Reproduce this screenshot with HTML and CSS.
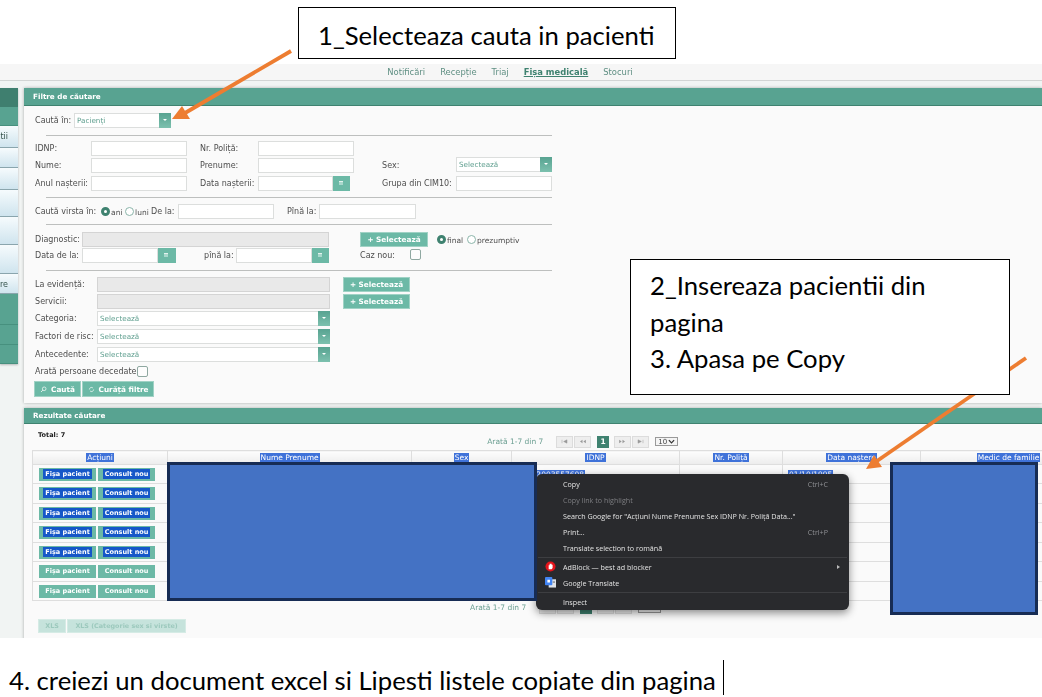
FILE: index.html
```html
<!DOCTYPE html>
<html lang="ro">
<head>
<meta charset="UTF-8">
<title>Instructiuni export pacienti</title>
<link rel="stylesheet" href="styles.css">
</head>
<body>
  <div class="top-space"></div>

  <div class="shot">
    <nav class="topnav">
      <a>Notificări</a><a>Recepție</a><a>Triaj</a><a class="active">Fișa medicală</a><a>Stocuri</a>
    </nav>

    <div class="main">
      <aside class="sidebar">
        <div class="side-head"></div>
        <div class="side-green h19"></div>
        <div class="side-item h22">tii</div>
        <div class="side-item h20"></div>
        <div class="side-item h22"></div>
        <div class="side-item h27"></div>
        <div class="side-item h28"></div>
        <div class="side-item h29"></div>
        <div class="side-item h20">re</div>
        <div class="side-green h31"></div>
        <div class="side-green h20"></div>
        <div class="side-green h19"></div>
      </aside>

      <div class="content">
        <section class="panel filters">
          <h3 class="panel-head">Filtre de căutare</h3>
          <form class="panel-body">
            <div class="row">
              <label class="lbl w39">Caută în:</label>
              <div class="combo w97"><span>Pacienți</span><i class="combo-btn"></i></div>
            </div>
            <hr class="mt7">

            <div class="row mt5">
              <label class="lbl w56">IDNP:</label>
              <input class="w96" type="text">
              <label class="lbl w58 ml13">Nr. Poliță:</label>
              <input class="w96" type="text">
            </div>
            <div class="row mt2">
              <label class="lbl w56">Nume:</label>
              <input class="w96" type="text">
              <label class="lbl w58 ml13">Prenume:</label>
              <input class="w96" type="text">
              <label class="lbl w74 ml28">Sex:</label>
              <div class="combo w96 up1"><span>Selectează</span><i class="combo-btn"></i></div>
            </div>
            <div class="row mt3">
              <label class="lbl w56">Anul nașterii:</label>
              <input class="w96" type="text">
              <label class="lbl w58 ml13">Data nașterii:</label>
              <input class="w75" type="text"><i class="cal-btn"></i>
              <label class="lbl w74 ml32">Grupa din CIM10:</label>
              <input class="w96" type="text">
            </div>
            <hr class="mt6">

            <div class="row mt6">
              <label class="lbl w66">Caută virsta în:</label>
              <i class="radio on"></i><span class="opt w15">ani</span>
              <i class="radio"></i><span class="opt w15">luni</span>
              <label class="lbl w27 ml2">De la:</label>
              <input class="w96" type="text">
              <label class="lbl w32 ml13">Pînă la:</label>
              <input class="w97" type="text">
            </div>
            <hr class="mt5">

            <div class="row mt7">
              <label class="lbl w47">Diagnostic:</label>
              <input class="w247" type="text" disabled>
              <button class="btn w68 ml31" type="button">+ Selectează</button>
              <i class="radio on ml9"></i><span class="opt w21">final</span>
              <i class="radio"></i><span class="opt">prezumptiv</span>
            </div>
            <div class="row mt1">
              <label class="lbl w47">Data de la:</label>
              <input class="w76" type="text"><i class="cal-btn w18"></i>
              <label class="lbl w32 ml28">pînă la:</label>
              <input class="w76" type="text"><i class="cal-btn"></i>
              <label class="lbl w50 ml31">Caz nou:</label>
              <i class="check up1"></i>
            </div>
            <hr class="mt7">

            <div class="row mt6">
              <label class="lbl w62">La evidență:</label>
              <input class="w233" type="text" disabled>
              <button class="btn w67 ml13" type="button">+ Selectează</button>
            </div>
            <div class="row mt2">
              <label class="lbl w62">Servicii:</label>
              <input class="w233" type="text" disabled>
              <button class="btn w67 ml13" type="button">+ Selectează</button>
            </div>
            <div class="row mt2">
              <label class="lbl w62">Categoria:</label>
              <div class="combo w233"><span>Selectează</span><i class="combo-btn"></i></div>
            </div>
            <div class="row mt3">
              <label class="lbl w62">Factori de risc:</label>
              <div class="combo w233"><span>Selectează</span><i class="combo-btn"></i></div>
            </div>
            <div class="row mt3">
              <label class="lbl w62">Antecedente:</label>
              <div class="combo w233"><span>Selectează</span><i class="combo-btn"></i></div>
            </div>
            <div class="row row-small mt4">
              <label class="lbl w102">Arată persoane decedate</label>
              <i class="check"></i>
            </div>
            <div class="row row-actions mt4">
              <button class="btn w47" type="button"><svg class="btn-icon" viewBox="0 0 10 10"><circle cx="6" cy="4" r="2.6" fill="none" stroke="#fff" stroke-width="1"/><path d="M4 6 1.5 8.5" stroke="#fff" stroke-width="1.2"/></svg>Caută</button>
              <button class="btn w72 ml1" type="button"><svg class="btn-icon" viewBox="0 0 10 10"><path d="M2 5a3 3 0 0 1 5-2.2M8 5a3 3 0 0 1-5 2.2" fill="none" stroke="#fff" stroke-width="1"/></svg>Curăță filtre</button>
            </div>
          </form>
        </section>

        <section class="panel results">
          <h3 class="panel-head small">Rezultate căutare</h3>
          <div class="toolbar">
            <b class="total">Total: 7</b>
            <div class="pager">
              <span class="pager-text">Arată 1-7 din 7</span>
              <a class="pg"><svg viewBox="0 0 10 6"><path d="M2 1v4M8 1 4 3l4 2z" fill="#999" stroke="#999" stroke-width=".6"/></svg></a>
              <a class="pg"><svg viewBox="0 0 10 6"><path d="M5 1 2 3l3 2zM9 1 6 3l3 2z" fill="#999"/></svg></a>
              <a class="pg-current">1</a>
              <a class="pg"><svg viewBox="0 0 10 6"><path d="M1 1l3 2-3 2zM5 1l3 2-3 2z" fill="#999"/></svg></a>
              <a class="pg"><svg viewBox="0 0 10 6"><path d="M8 1v4M2 1l4 2-4 2z" fill="#999" stroke="#999" stroke-width=".6"/></svg></a>
              <span class="pg-size">10<svg viewBox="0 0 8 5"><path d="M1 1l3 3 3-3" fill="none" stroke="#333" stroke-width="1.4"/></svg></span>
            </div>
          </div>

          <table class="grid">
            <colgroup>
              <col class="c-act"><col class="c-name"><col class="c-sex"><col class="c-idnp"><col class="c-pol"><col class="c-date"><col class="c-med">
            </colgroup>
            <thead>
              <tr>
                <th><span class="sel">Acțiuni</span></th>
                <th><span class="sel">Nume Prenume</span></th>
                <th><span class="sel">Sex</span></th>
                <th><span class="sel">IDNP</span></th>
                <th><span class="sel">Nr. Poliță</span></th>
                <th><span class="sel">Data naștere</span></th>
                <th><span class="sel">Medic de familie</span></th>
              </tr>
            </thead>
            <tbody>
              <tr>
                <td class="acts"><a class="act"><span class="sel-btn">Fișa pacient</span></a><a class="act"><span class="sel-btn">Consult nou</span></a></td>
                <td></td><td></td>
                <td class="val idnp"><span class="sel">2002003557608</span></td>
                <td></td>
                <td class="val"><span class="sel">01/10/1995</span></td>
                <td></td>
              </tr>
              <tr><td class="acts"><a class="act"><span class="sel-btn">Fișa pacient</span></a><a class="act"><span class="sel-btn">Consult nou</span></a></td><td></td><td></td><td></td><td></td><td></td><td></td></tr>
              <tr><td class="acts"><a class="act"><span class="sel-btn">Fișa pacient</span></a><a class="act"><span class="sel-btn">Consult nou</span></a></td><td></td><td></td><td></td><td></td><td></td><td></td></tr>
              <tr><td class="acts"><a class="act"><span class="sel-btn">Fișa pacient</span></a><a class="act"><span class="sel-btn">Consult nou</span></a></td><td></td><td></td><td></td><td></td><td></td><td></td></tr>
              <tr><td class="acts"><a class="act"><span class="sel-btn">Fișa pacient</span></a><a class="act"><span class="sel-btn">Consult nou</span></a></td><td></td><td></td><td></td><td></td><td></td><td></td></tr>
              <tr><td class="acts"><a class="act">Fișa pacient</a><a class="act">Consult nou</a></td><td></td><td></td><td></td><td></td><td></td><td></td></tr>
              <tr><td class="acts"><a class="act">Fișa pacient</a><a class="act">Consult nou</a></td><td></td><td></td><td></td><td></td><td></td><td></td></tr>
            </tbody>
          </table>

          <div class="toolbar-bottom">
            <div class="pager">
              <span class="pager-text">Arată 1-7 din 7</span>
              <a class="pg"></a><a class="pg"></a><a class="pg-current"></a><a class="pg"></a><a class="pg"></a>
              <span class="pg-size"></span>
            </div>
          </div>

          <div class="exports">
            <button class="btn-off w28" type="button">XLS</button>
            <button class="btn-off w119" type="button">XLS (Categorie sex si virste)</button>
          </div>
        </section>
      </div>
    </div>

    <!-- context menu from the browser -->
    <ul class="menu">
      <li><span>Copy</span><kbd>Ctrl+C</kbd></li>
      <li class="off"><span>Copy link to highlight</span></li>
      <li><span>Search Google for "Acțiuni Nume Prenume Sex IDNP Nr. Poliță Data..."</span></li>
      <li><span>Print...</span><kbd>Ctrl+P</kbd></li>
      <li><span>Translate selection to română</span></li>
      <li class="sep"></li>
      <li>
        <svg class="menu-icon" viewBox="0 0 12 12"><circle cx="6" cy="6" r="5.5" fill="#e4141b"/><path d="M4 9V4.5h1V3h2.2v1.2H8.3V7.5L7.2 9z" fill="#fff"/></svg>
        <span>AdBlock — best ad blocker</span><i class="menu-arrow"></i>
      </li>
      <li>
        <svg class="menu-icon" viewBox="0 0 12 12"><rect x="4" y="2.5" width="8" height="9" fill="#dfe3e8"/><rect x="0" y="0" width="8" height="9" rx="1" fill="#4285f4"/><rect x="2.6" y="3" width="2.8" height="3" fill="#fff"/><rect x="8.5" y="5" width="2.4" height="1" fill="#555"/></svg>
        <span>Google Translate</span>
      </li>
      <li class="sep"></li>
      <li><span>Inspect</span></li>
    </ul>
  </div>

  <p class="caption">4. creiezi un document excel si Lipesti listele copiate din pagina<i class="caret"></i></p>

  <!-- annotations drawn over the screenshot -->
  <div class="cover cover-a"></div>
  <div class="cover cover-b"></div>

  <svg class="arrows" viewBox="0 0 1042 697">
    <path d="M291 51 185 113" fill="none" stroke="#ed7d31" stroke-width="3.8"/>
    <path d="M172 119 182 106 190 119z" fill="#ed7d31"/>
    <path d="M1026 358 877 461" fill="none" stroke="#ed7d31" stroke-width="3.8"/>
    <path d="M866 469 874 455 882 467z" fill="#ed7d31"/>
  </svg>

  <div class="note note-one">1_Selecteaza cauta in pacienti</div>
  <div class="note note-two">2_Insereaza pacientii din<br>pagina<br>3. Apasa pe Copy</div>
</body>
</html>
```

FILE: styles.css
```css
html, body {
  margin: 0;
  padding: 0;
}

body {
  position: relative;
  width: 1042px;
  height: 697px;
  overflow: hidden;
  background: #fff;
  font-family: "DejaVu Sans", Verdana, sans-serif;
}

.top-space {
  height: 64px;
}

/* the browser screenshot */
.shot {
  position: relative;
  height: 574px;
  overflow: hidden;
  background: #f1f4f3;
  font-size: 8px;
  color: #4d4d4d;
  filter: blur(0.35px);
}

.topnav {
  display: flex;
  justify-content: center;
  gap: 15px;
  height: 16px;
  padding-right: 22px;
  line-height: 17px;
  font-size: 8.4px;
  background: #f6f6f6;
  border-bottom: 1px solid #d2d5d4;
  color: #5f8f83;
}

.topnav .active {
  font-weight: bold;
  text-decoration: underline;
  color: #3f8270;
}

.main {
  display: flex;
  gap: 6px;
  padding-top: 7px;
}

.sidebar {
  flex: 0 0 18px;
  box-shadow: 0 1px 2px rgba(0, 0, 0, .25);
  align-self: flex-start;
}

.side-head {
  height: 19px;
  background: #3f7f6f;
}

.side-green {
  background: #58a391;
  border-bottom: 1px solid #47907e;
  box-sizing: border-box;
}

.side-item {
  box-sizing: border-box;
  padding: 6px 10px 0 0;
  text-align: right;
  font-size: 8px;
  color: #34524b;
  background: linear-gradient(#f6fbfd, #cfe4ee);
  border-bottom: 1px solid #8aa5ad;
}

.h19 { height: 19px; }
.h20 { height: 20px; }
.h22 { height: 22px; }
.h27 { height: 27px; }
.h28 { height: 28px; }
.h29 { height: 29px; }
.h31 { height: 31px; }

.content {
  flex: 1;
  min-width: 0;
}

.panel {
  background: #fafafa;
  box-shadow: 0 0 3px rgba(0, 0, 0, .3);
}

.filters {
  margin-bottom: 5px;
}

.panel-head {
  margin: 0;
  height: 17px;
  padding-left: 9px;
  font-size: 7.2px;
  line-height: 18px;
  color: #fff;
  background: #58a391;
  border-bottom: 1px solid #3f8270;
}

.panel-head.small {
  height: 15px;
  line-height: 15px;
}

.panel-body {
  margin: 0;
  padding: 7px 0 6px 11px;
}

hr {
  width: 506px;
  height: 1px;
  margin-bottom: 0;
  margin-left: 11px;
  margin-right: 0;
  padding: 0;
  border: 0;
  background: #bdbfbe;
}

.row {
  display: flex;
  align-items: center;
  height: 15px;
}

.row-small { height: 11px; }
.row-actions { height: 16px; margin-left: -1px; }

.mt1 { margin-top: 1px; }
.mt2 { margin-top: 2px; }
.mt3 { margin-top: 3px; }
.mt4 { margin-top: 4px; }
.mt5 { margin-top: 5px; }
.mt6 { margin-top: 6px; }
.mt7 { margin-top: 7px; }

.ml1 { margin-left: 1px; }
.ml2 { margin-left: 2px; }
.ml9 { margin-left: 9px; }
.ml13 { margin-left: 13px; }
.ml28 { margin-left: 28px; }
.ml31 { margin-left: 31px; }
.ml32 { margin-left: 32px; }

.up1 { position: relative; top: -1px; }

.w15 { width: 15px; }
.w21 { width: 21px; }
.w27 { width: 27px; }
.w28 { width: 28px; }
.w32 { width: 32px; }
.w39 { width: 39px; }
.w47 { width: 47px; }
.w50 { width: 50px; }
.w56 { width: 56px; }
.w58 { width: 58px; }
.w62 { width: 62px; }
.w66 { width: 66px; }
.w67 { width: 67px; }
.w68 { width: 68px; }
.w72 { width: 72px; }
.w74 { width: 74px; }
.w75 { width: 75px; }
.w76 { width: 76px; }
.w96 { width: 96px; }
.w97 { width: 97px; }
.w102 { width: 102px; }
.w119 { width: 119px; }
.w233 { width: 233px; }
.w247 { width: 247px; }

.lbl {
  flex: none;
  white-space: nowrap;
}

input {
  flex: none;
  box-sizing: border-box;
  height: 15px;
  margin: 0;
  padding: 0 3px;
  background: #fff;
  border: 1px solid #dcdedd;
}

input:disabled {
  background: #e9e9e9;
  border-color: #d4d4d4;
}

.combo {
  flex: none;
  box-sizing: border-box;
  display: flex;
  justify-content: space-between;
  height: 15px;
  padding-left: 2px;
  line-height: 13px;
  font-size: 7.2px;
  color: #5f9f8f;
  background: #fff;
  border: 1px solid #dcdedd;
}

.combo-btn {
  position: relative;
  width: 12px;
  margin: -1px -1px -1px 0;
  background: linear-gradient(#58a391, #7cc0ae);
}

.combo-btn::after {
  content: "";
  position: absolute;
  left: 4px;
  top: 6px;
  border: 2px solid transparent;
  border-top: 2px solid #fff;
}

.cal-btn {
  flex: none;
  position: relative;
  width: 17px;
  height: 15px;
  background: #6cb9a6;
}

.cal-btn.w18 { width: 18px; }

.cal-btn::after {
  content: "";
  position: absolute;
  left: 6px;
  top: 5px;
  width: 4px;
  height: 3px;
  background: #a9d8cc;
  border-top: 1px solid #e2f2ee;
}

.radio {
  flex: none;
  box-sizing: border-box;
  width: 9px;
  height: 9px;
  border: 1px solid #8bb5aa;
  border-radius: 50%;
  background: #fff;
}

.radio.on {
  border: 3px solid #3f8270;
}

.opt {
  flex: none;
  box-sizing: border-box;
  padding: 2px 0 0 1px;
  font-size: 7.5px;
  color: #4d4d4d;
}

.check {
  flex: none;
  box-sizing: border-box;
  width: 11px;
  height: 11px;
  background: #fdfdfd;
  border: 1px solid #8fa8a1;
  border-radius: 2px;
}

.btn {
  flex: none;
  display: flex;
  align-items: center;
  justify-content: center;
  height: 15px;
  padding: 0;
  font: bold 7.3px "DejaVu Sans", Verdana, sans-serif;
  color: #fff;
  background: #6cb9a6;
  border: 1px solid #a0d2c5;
}

.row-actions .btn {
  height: 16px;
}

.btn-icon {
  width: 7px;
  height: 7px;
  margin-right: 4px;
}

/* results */
.results {
  height: 240px;
}

.toolbar {
  display: flex;
  height: 26px;
}

.total {
  margin: 7px 0 0 14px;
  font-size: 6.5px;
  color: #222;
}

.pager {
  display: flex;
  align-items: center;
  height: 13px;
  color: #6a9e91;
}

.toolbar .pager {
  margin: 11px 0 0 422px;
}

.pager-text {
  width: 69px;
  font-size: 7.5px;
}

.pg {
  display: flex;
  align-items: center;
  justify-content: center;
  box-sizing: border-box;
  width: 17px;
  height: 12px;
  margin-right: 1px;
  background: #eee;
  border: 1px solid #dcdcdc;
}

.pg svg {
  width: 9px;
  height: 5px;
}

.pg-current {
  box-sizing: border-box;
  width: 12px;
  height: 12px;
  margin: 0 5px;
  line-height: 12px;
  text-align: center;
  font-size: 7.5px;
  font-weight: bold;
  color: #fff;
  background: #3f8270;
}

.pg-size {
  display: flex;
  align-items: center;
  justify-content: space-between;
  box-sizing: border-box;
  width: 23px;
  height: 9px;
  margin-left: 5px;
  padding: 0 2px;
  font-size: 7px;
  color: #444;
  background: #f4f4f4;
  border: 1px solid #999;
}

.pg-size svg {
  width: 7px;
  height: 5px;
}

.grid {
  table-layout: fixed;
  width: 1064px;
  margin-left: 8px;
  border-collapse: collapse;
  font-size: 7.5px;
}

.c-act { width: 135px; }
.c-name { width: 244px; }
.c-sex { width: 100px; }
.c-idnp { width: 168px; }
.c-pol { width: 103px; }
.c-date { width: 138px; }
.c-med { width: 176px; }

.grid thead tr { height: 14px; }
.grid tbody tr { height: 19px; }
.grid tbody tr:nth-child(even) { height: 20px; }

.grid th {
  box-sizing: border-box;
  height: 14px;
  padding: 0;
  line-height: 9px;
  font-weight: normal;
  background: linear-gradient(#fdfdfd, #ececec);
  border: 1px solid #dedede;
}

.grid td {
  box-sizing: border-box;
  padding: 0;
  line-height: 9px;
  border: 1px solid #dedede;
  background: #fafafa;
}

.grid .val {
  vertical-align: top;
  padding: 5px 0 0 5px;
}

.grid .idnp {
  padding-left: 9px;
}

.sel {
  color: #fff;
  background: #3f72d9;
  padding: 0 1px;
}

.acts {
  padding-left: 6px !important;
  white-space: nowrap;
}

.act {
  display: inline-block;
  box-sizing: border-box;
  width: 57px;
  height: 13px;
  margin-left: 2px;
  line-height: 13px;
  text-align: center;
  font-size: 6.5px;
  font-weight: bold;
  color: #fff;
  background: #6cb9a6;
  vertical-align: middle;
}

.acts .act:first-child {
  margin-left: 0;
}

.sel-btn {
  padding: 1px 2px;
  background: #1557c8;
}

.toolbar-bottom {
  height: 18px;
}

.toolbar-bottom .pager {
  margin-left: 446px;
}

.toolbar-bottom .pg-size {
  height: 11px;
}

.exports {
  display: flex;
  gap: 1px;
  margin-left: 14px;
}

.btn-off {
  height: 14px;
  padding: 0;
  font: bold 6.4px "DejaVu Sans", Verdana, sans-serif;
  color: #9cc9bd;
  background: #c6e3dc;
  border: 1px solid #d5ebe5;
}

/* context menu */
.menu {
  position: absolute;
  left: 536px;
  top: 410px;
  box-sizing: border-box;
  width: 313px;
  height: 136px;
  margin: 0;
  padding: 2px 0;
  list-style: none;
  font-family: "Open Sans", sans-serif;
  font-size: 7.15px;
  color: #e3e3e3;
  background: #292a2d;
  border-radius: 6px;
  box-shadow: 0 3px 9px rgba(0, 0, 0, .45);
}

.menu li {
  position: relative;
  display: flex;
  justify-content: space-between;
  align-items: center;
  height: 16px;
  padding: 0 21px 0 27px;
}

.menu li.off {
  color: #7d7e81;
}

.menu li.sep {
  height: 1px;
  margin: 1px 2px 1px;
  padding: 0;
  background: #3d3e41;
}

.menu kbd {
  font: inherit;
  color: #8f9094;
}

.menu-icon {
  position: absolute;
  left: 9px;
  top: 2px;
  width: 11px;
  height: 11px;
}

.menu-arrow {
  position: absolute;
  right: 7px;
  top: 6px;
  border: 2px solid transparent;
  border-left: 3px solid #bbb;
}

/* word style notes */
.caption {
  margin: 0;
  padding: 28px 0 0 9px;
  font-family: Lato, "Open Sans", sans-serif;
  font-size: 25.7px;
  line-height: 28px;
  color: #000;
  white-space: nowrap;
}

.caret {
  position: absolute;
  left: 723px;
  top: 660px;
  width: 1px;
  height: 35px;
  background: #000;
}

.cover {
  position: absolute;
  box-sizing: border-box;
  background: #4472c4;
  border: 3px solid #172c54;
}

.cover-a {
  left: 167px;
  top: 462px;
  width: 370px;
  height: 139px;
}

.cover-b {
  left: 890px;
  top: 462px;
  width: 148px;
  height: 153px;
}

.arrows {
  position: absolute;
  left: 0;
  top: 0;
  width: 1042px;
  height: 697px;
}

.note {
  position: absolute;
  box-sizing: border-box;
  font-family: Lato, "Open Sans", sans-serif;
  font-size: 25.7px;
  color: #000;
  background: #fff;
  border: 1px solid #000;
}

.note-one {
  left: 298px;
  top: 7px;
  width: 378px;
  height: 52px;
  padding-left: 19px;
  line-height: 54px;
}

.note-two {
  left: 630px;
  top: 259px;
  width: 380px;
  height: 136px;
  padding: 7px 0 0 19px;
  line-height: 36.5px;
}
```
